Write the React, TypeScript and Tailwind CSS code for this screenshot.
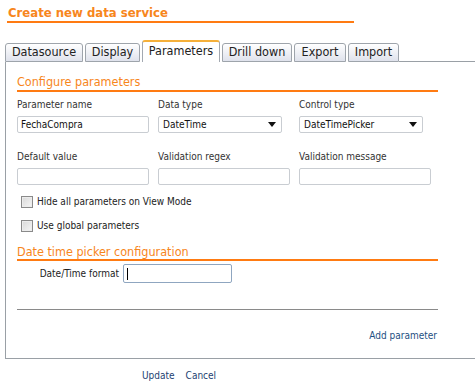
import React from "react";

const tabs = [
  { name: "Datasource", w: "w-[78px]" },
  { name: "Display", w: "w-[55px]" },
  { name: "Parameters", w: "w-[78px]" },
  { name: "Drill down", w: "w-[70px]" },
  { name: "Export", w: "w-[52px]" },
  { name: "Import", w: "w-[51px]" },
];

function TextBox({ value = "", w = "w-[132px]" }: { value?: string; w?: string }) {
  return (
    <div
      className={`${w} h-[17px] border border-[#c9cdd2] rounded-[2px] bg-white px-[3px] text-[10px] leading-[15px] text-[#111]`}
    >
      {value}
    </div>
  );
}

function Select({ value }: { value: string }) {
  return (
    <div className="w-[124px] h-[17px] border border-[#c9cdd2] rounded-[2px] bg-white pl-[4px] pr-[5px] flex items-center justify-between text-[10px] text-[#111]">
      <span>{value}</span>
      <svg width="8" height="5" viewBox="0 0 8 5">
        <path d="M0 0h8L4 5z" fill="#111" />
      </svg>
    </div>
  );
}

function Field({ label, children }: { label: string; children: React.ReactNode }) {
  return (
    <div className="flex flex-col">
      <div className="h-[12px] text-[10px] leading-[12px] text-[#333] mb-[5px]">{label}</div>
      {children}
    </div>
  );
}

function Check({ label }: { label: string }) {
  return (
    <div className="flex items-center gap-[4px] h-[13px]">
      <span className="w-[12px] h-[12px] border border-[#8a8a8a] bg-gradient-to-br from-[#d8d8d8] to-[#f6f6f6] shadow-[inset_0_0_0_1px_#ececec]" />
      <span className="text-[10px] text-[#222]">{label}</span>
    </div>
  );
}

export default function App() {
  return (
    <div className="w-[475px] h-[388px] bg-white overflow-hidden font-['DejaVu_Sans_Condensed','DejaVu_Sans',sans-serif] text-[#333]">
      {/* title */}
      <div className="pt-[4px] pl-[7px]">
        <div className="w-[347px] h-[19px] border-b-2 border-[#ff7b12] pl-[1px] text-[13px] leading-[17px] font-bold text-[#f7861c]">
          Create new data service
        </div>
      </div>

      {/* tabs */}
      <div className="mt-[17px] flex items-end h-[22px]">
        <div className="w-[5px] h-[1px] bg-white" />
        {tabs.map((t) =>
          t.name === "Parameters" ? (
            <div
              key={t.name}
              className={`${t.w} h-[22px] mr-[2px] rounded-t-[3px] border-t-2 border-x border-t-[#f5b03a] border-x-[#a3a9b1] bg-white text-center text-[12.5px] leading-[18px] text-[#222]`}
            >
              {t.name}
            </div>
          ) : (
            <div
              key={t.name}
              className={`${t.w} h-[19px] mr-[2px] rounded-t-[3px] border border-[#9ea4ab] bg-gradient-to-b from-white to-[#dfe2ec] text-center text-[12.5px] leading-[16px] text-[#222]`}
            >
              {t.name}
            </div>
          )
        )}
        <div className="flex-1 h-[1px] bg-[#9aa0a6] -ml-[2px]" />
      </div>

      {/* panel */}
      <div className="ml-[5px] h-[297px] border-l border-b border-[#9aa0a6] pl-[11px] pt-[12px] flex flex-col">
        <div className="w-[421px] h-[18px] border-b-2 border-[#ff7b12] text-[12.5px] leading-[15px] text-[#f7861c]">
          Configure parameters
        </div>

        <div className="mt-[7px] grid grid-cols-[141px_141px_141px] gap-y-[18px]">
          <Field label="Parameter name">
            <TextBox value="FechaCompra" />
          </Field>
          <Field label="Data type">
            <Select value="DateTime" />
          </Field>
          <Field label="Control type">
            <Select value="DateTimePicker" />
          </Field>
          <Field label="Default value">
            <TextBox />
          </Field>
          <Field label="Validation regex">
            <TextBox />
          </Field>
          <Field label="Validation message">
            <TextBox />
          </Field>
        </div>

        <div className="mt-[10px] pl-[4px] flex flex-col gap-[11px]">
          <Check label="Hide all parameters on View Mode" />
          <Check label="Use global parameters" />
        </div>

        <div className="mt-[12px] w-[421px] h-[17px] border-b-2 border-[#ff7b12] text-[12.5px] leading-[15px] text-[#f7861c]">
          Date time picker configuration
        </div>

        <div className="mt-[3px] flex items-center">
          <span className="w-[106px] text-right pr-[4px] text-[10px] text-[#222]">Date/Time format</span>
          <div className="w-[109px] h-[19px] border border-[#8fa6c0] rounded-[2px] bg-white pl-[3px] flex items-center">
            <span className="w-[1px] h-[12px] bg-black" />
          </div>
        </div>

        <div className="mt-[26px] w-[421px] h-[1px] bg-[#8a8a8a]" />

        <div className="w-[420px] mt-[20px] text-right text-[10px] leading-[12px] text-[#1e4f82]">Add parameter</div>
      </div>

      {/* footer */}
      <div className="mt-[11px] flex gap-[11px] pl-[142px] text-[10px] leading-[12px] text-[#1e3f72]">
        <span>Update</span>
        <span>Cancel</span>
      </div>
    </div>
  );
}
